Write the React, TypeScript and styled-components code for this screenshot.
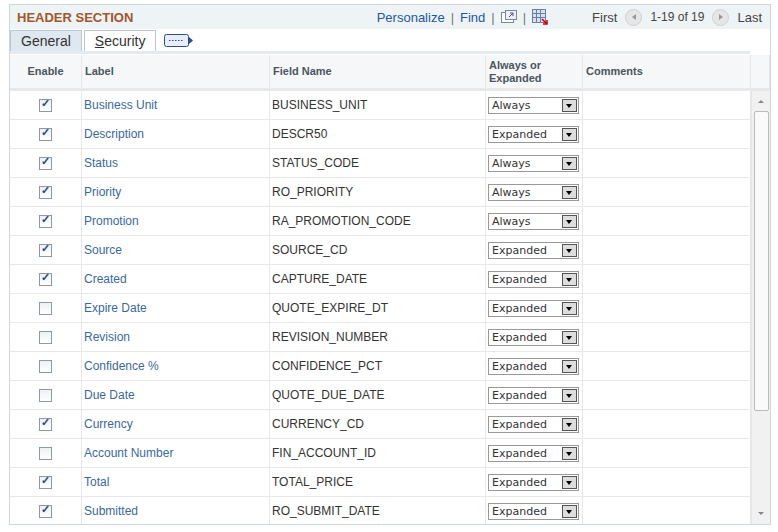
import React from "react";
import styled, { createGlobalStyle } from "styled-components";

const G = createGlobalStyle`
  body { margin: 0; font-family: Arial, "Liberation Sans", sans-serif; background: #fff; }
`;
const Frame = styled.div`
  margin: 4px 0 0 9px; width: 762px; height: 521px; border: 1px solid #cfd7de; box-sizing: border-box;
  display: flex; flex-direction: column; overflow: hidden;
`;
const Bar = styled.div`
  height: 24px; background: #eef3f6; display: flex; align-items: center; padding: 0 8px 0 7px; font-size: 13px;
`;
const Title = styled.div`font-weight: bold; color: #a2582a; font-size: 13px; flex: 1;`;
const Link = styled.span`color: #2456a4;`;
const Sep = styled.span`color: #777; margin: 0 6px;`;
const Gray = styled.span`color: #444;`;
const Circ = styled.span<{ r?: boolean }>`
  display: inline-block; width: 17px; height: 17px; border-radius: 50%; background: #e4e6e8; border: 1px solid #d0d0d0;
  box-sizing: border-box; margin: 0 8px; vertical-align: -3px; position: relative;
  &::after{content:""; position:absolute; top:4px; left:${(p) => (p.r ? "6px" : "3px")};
    border:3.5px solid transparent; ${(p) => (p.r ? "border-left:4px solid #999" : "border-right:4px solid #999")};}
`;
const Tabs = styled.div`height: 22px; display: flex; align-items: flex-end; gap: 2px; border-bottom: 3px solid #e3ebf2; margin-right: 20px;`;
const Tab = styled.div<{ on?: boolean }>`
  height: 20px; padding: 0 10px; font-size: 14px; display: flex; align-items: center; border: 1px solid #b9c7d4; border-bottom: none;
  background: ${(p) => (p.on ? "#dfe8f0" : "#fff")}; color: #333;
`;
const Grid = "72px 188px 216px 97px 168px 19px";
const Head = styled.div`
  display: grid; grid-template-columns: ${Grid}; height: 33px; background: #f6f7f8; border-bottom: 3px solid #e6e8ea; margin-top: 1px;
`;
const HC = styled.div<{ c?: boolean }>`
  font-size: 11px; font-weight: bold; color: #4a5560; display: flex; align-items: center; padding: 0 3px;
  justify-content: ${(p) => (p.c ? "center" : "flex-start")}; border-right: 1px solid #e4e6e8; line-height: 13px;
`;
const Body = styled.div`display: flex; flex: 1; min-height: 0;`;
const Rows = styled.div`flex: 1;`;
const Row = styled.div`display: grid; grid-template-columns: 72px 188px 216px 97px 168px; height: 29px; border-bottom: 1px solid #e6e8ea; box-sizing: border-box;`;
const C = styled.div<{ c?: boolean; l?: boolean }>`
  display: flex; align-items: center; font-size: 12px; padding: 0 2px; color: ${(p) => (p.l ? "#3b68a0" : "#333")};
  justify-content: ${(p) => (p.c ? "center" : "flex-start")}; border-right: 1px solid #e6e8ea;
`;
const Box = styled.span<{ on: boolean }>`
  width: 11px; height: 11px; border: 1px solid #8d9aa6; background: linear-gradient(#eef0f2, #fff); position: relative;
  &::after{content:"${(p) => (p.on ? "✓" : "")}"; position:absolute; left:1px; top:-3px; font-size:11px; color:#2a4a8a; font-weight:bold;}
`;
const Sel = styled.div`
  width: 91px; height: 17px; border: 1px solid #999; display: flex; align-items: center; justify-content: space-between;
  color: #333; padding-left: 3px; box-sizing: border-box; font-family: "DejaVu Sans", sans-serif; font-size: 11px;
`;
const Arr = styled.span`
  width: 15px; height: 13px; border: 1px solid #555; background: #ddd; margin-right: 1px; box-sizing: border-box; position: relative;
  &::after{content:""; position:absolute; left:3px; top:4px; border:3.5px solid transparent; border-top:4px solid #000;}
`;
const Scroll = styled.div`width: 19px; background: #f1f1f1; display: flex; flex-direction: column; align-items: center; border-left:1px solid #e6e6e6;`;
const Thumb = styled.div`width: 15px; height: 300px; margin-top: 8px; border: 1px solid #bbb; border-radius: 2px; background: #fafafa; box-sizing: border-box;`;
const Tri = styled.div<{ up?: boolean }>`
  margin-top: ${(p) => (p.up ? "6px" : "auto")}; margin-bottom: ${(p) => (p.up ? "0" : "6px")};
  border: 3px solid transparent; ${(p) => (p.up ? "border-bottom:3px solid #888" : "border-top:3px solid #888")};
`;
const Spacer = styled.span`width: 44px;`;

const data: [boolean, string, string, string][] = [
  [true, "Business Unit", "BUSINESS_UNIT", "Always"],
  [true, "Description", "DESCR50", "Expanded"],
  [true, "Status", "STATUS_CODE", "Always"],
  [true, "Priority", "RO_PRIORITY", "Always"],
  [true, "Promotion", "RA_PROMOTION_CODE", "Always"],
  [true, "Source", "SOURCE_CD", "Expanded"],
  [true, "Created", "CAPTURE_DATE", "Expanded"],
  [false, "Expire Date", "QUOTE_EXPIRE_DT", "Expanded"],
  [false, "Revision", "REVISION_NUMBER", "Expanded"],
  [false, "Confidence %", "CONFIDENCE_PCT", "Expanded"],
  [false, "Due Date", "QUOTE_DUE_DATE", "Expanded"],
  [true, "Currency", "CURRENCY_CD", "Expanded"],
  [false, "Account Number", "FIN_ACCOUNT_ID", "Expanded"],
  [true, "Total", "TOTAL_PRICE", "Expanded"],
  [true, "Submitted", "RO_SUBMIT_DATE", "Expanded"],
];

export default function App() {
  return (
    <>
      <G />
      <Frame>
        <Bar>
          <Title>HEADER SECTION</Title>
          <Link>Personalize</Link><Sep>|</Sep><Link>Find</Link><Sep>|</Sep>
          <svg width="16" height="14"><rect x="0.5" y="2.5" width="12" height="10" fill="#fff" stroke="#7a8a99" /><rect x="4.5" y="0.5" width="11" height="9" fill="#eef" stroke="#7a8a99" /><path d="M8 7l4-4M9 3h3v3" stroke="#555" fill="none" /></svg>
          <Sep>|</Sep>
          <svg width="16" height="16"><rect x="0.5" y="0.5" width="13" height="13" fill="#d8e0ec" stroke="#6a7fa8" /><path d="M0 4.5h14M0 8.5h14M4.5 0v14M8.5 0v14" stroke="#6a7fa8" /><path d="M10 10l5 5M15 11v4h-4" stroke="#c00" strokeWidth="1.5" fill="none" /></svg>
          <Spacer />
          <Gray>First</Gray><Circ /><Gray style={{ fontSize: 12 }}>1-19 of 19</Gray><Circ r /><Gray>Last</Gray>
        </Bar>
        <Tabs>
          <Tab on>General</Tab>
          <Tab><u>S</u>ecurity</Tab>
          <svg width="30" height="16" style={{ marginLeft: 6, marginBottom: 2 }}><rect x="0.5" y="1.5" width="24" height="12" rx="2" fill="#e8eef8" stroke="#2a4a9a" /><path d="M5 7.5h15" stroke="#2a4a9a" strokeDasharray="1.5 1.5" /><path d="M25 4l4 3.5-4 3.5z" fill="#2a4a9a" /></svg>
        </Tabs>
        <Head>
          <HC c>Enable</HC><HC>Label</HC><HC>Field Name</HC><HC>Always or<br />Expanded</HC><HC>Comments</HC><HC />
        </Head>
        <Body>
          <Rows>
            {data.map(([on, l, f, s]) => (
              <Row key={f}>
                <C c><Box on={on} /></C><C l>{l}</C><C>{f}</C>
                <C><Sel>{s}<Arr /></Sel></C><C />
              </Row>
            ))}
          </Rows>
          <Scroll><Tri up /><Thumb /><Tri /></Scroll>
        </Body>
      </Frame>
    </>
  );
}
